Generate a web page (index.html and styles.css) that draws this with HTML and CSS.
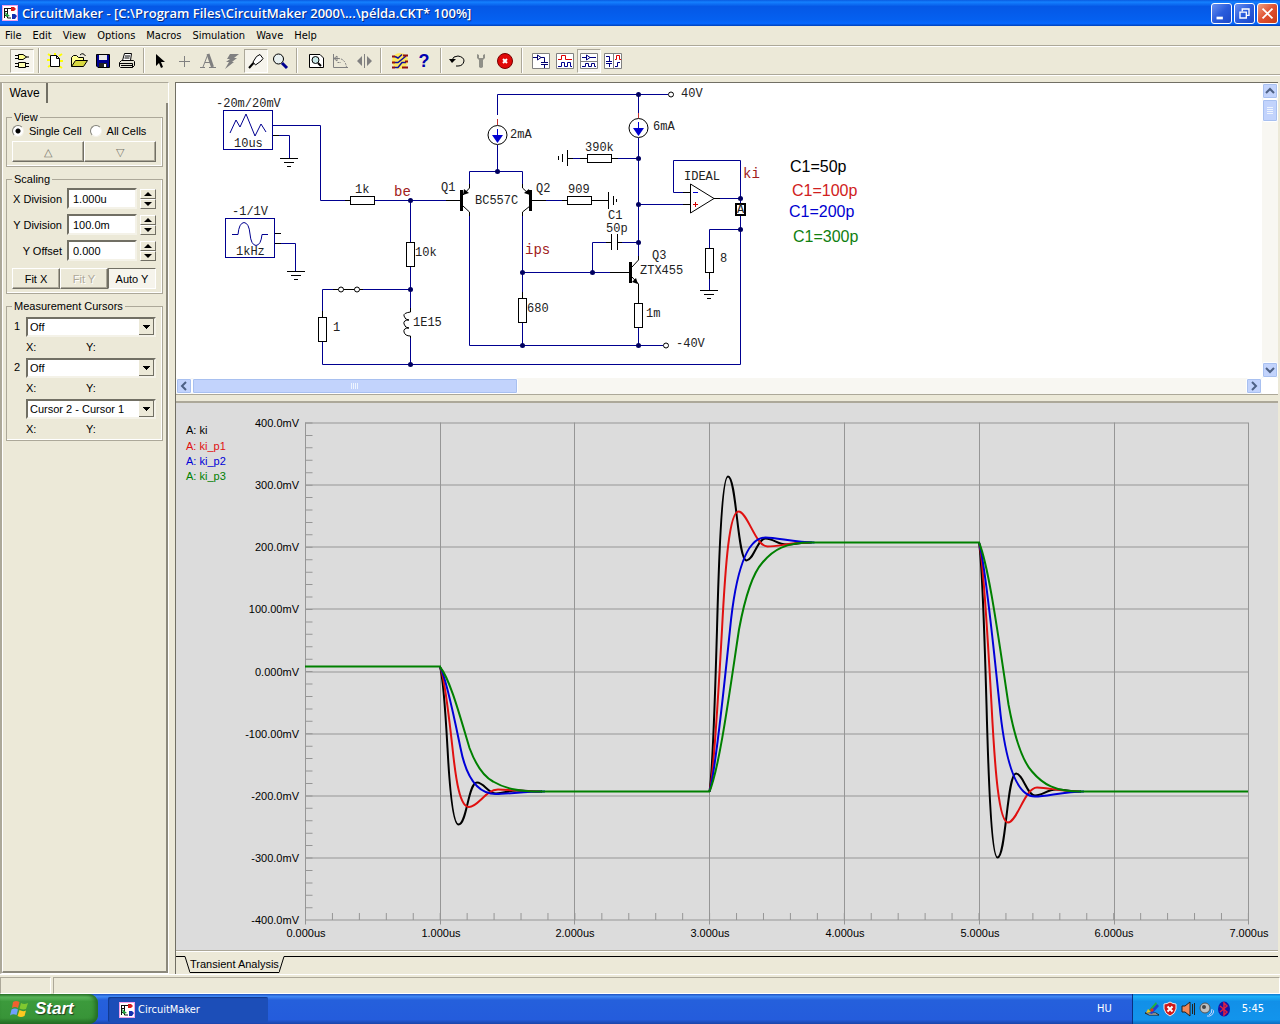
FILE: index.html
```
<!DOCTYPE html>
<html lang="en">
<head>
<meta charset="UTF-8">
<title>CircuitMaker</title>
<link rel="stylesheet" href="styles.css">
</head>
<body>

<!-- shared symbols -->
<svg class="defs" width="0" height="0">
  <defs>
    <symbol id="app" viewBox="0 0 16 16">
      <rect x="0.5" y="0.5" width="15" height="15" fill="#fff" stroke="#f0a0e8"/>
      <path d="M2 3.5H10M2 6.5H6M2.5 3V13M5.5 4V13H9M3 10.5H7" stroke="#111" fill="none"/>
      <path d="M9 2H12L14 4L12 6H9Z" fill="#d81c1c"/>
      <path d="M3 7L8 11L4 12Z" fill="#20a040"/>
      <path d="M10 9H13L15 11L13 14H10Z" fill="#1530b0"/>
    </symbol>
    <symbol id="ground" viewBox="-10 0 20 10" overflow="visible">
      <path d="M-9 0.5H9M-5 4.5H5M-2 8.5H2" stroke="#000"/>
    </symbol>
  </defs>
</svg>

<header class="titlebar">
  <svg class="ico16"><use href="#app"/></svg>
  <h1>CircuitMaker - [C:\Program Files\CircuitMaker 2000\...\példa.CKT* 100%]</h1>
  <button class="winbtn" aria-label="Minimize"><svg viewBox="0 0 21 21"><path d="M5 15.5H12" stroke="#fff" stroke-width="3"/></svg></button>
  <button class="winbtn" aria-label="Restore"><svg viewBox="0 0 21 21"><path d="M8 8V5.5H15.5V12.5H13M5.5 9H12.5V15.5H5.5Z" fill="none" stroke="#fff" stroke-width="1.5"/></svg></button>
  <button class="winbtn close" aria-label="Close"><svg viewBox="0 0 21 21"><path d="M5 5L16 16M16 5L5 16" stroke="#fff" stroke-width="2"/></svg></button>
</header>

<nav class="menu">
  <button>File</button><button>Edit</button><button>View</button><button>Options</button><button>Macros</button><button>Simulation</button><button>Wave</button><button>Help</button>
</nav>

<div class="toolbar">
  <button class="tool on" aria-label="Parts"><svg viewBox="0 0 20 20"><path d="M6.5 3.5H11L14.5 6L11 8.5H6.5Z" fill="#ffff90" stroke="#000"/><path d="M3 4.5H6M3 7.5H6M14 6H17M6.5 11.5H13.5V16.5H6.5ZM3 12.5H6M3 15.5H6M14 12.5H17M14 15.5H17" fill="#ffffb0" stroke="#000"/></svg></button>
  <span class="sep"></span>
  <button class="tool" aria-label="New"><svg viewBox="0 0 20 20"><path d="M3 3L6 5M2 9H5M3 16L6 14M17 3L14 5M18 10H15M17 17L14 15M10 2V4" stroke="#ff0" stroke-width="2"/><path d="M5.5 4.5H11.5L14.5 7.5V15.5H5.5ZM11.5 4.5V7.5H14.5" fill="#fff" stroke="#000"/></svg></button>
  <button class="tool" aria-label="Open"><svg viewBox="0 0 20 20"><path d="M2.5 15.5V6.5L4.5 4.5H7.5L9.5 6.5H14.5V9.5" fill="#ffff90" stroke="#000"/><path d="M2.5 15.5L6.5 9.5H18.5L14.5 15.5Z" fill="#d8d840" stroke="#000"/><path d="M11 4Q14 1 16.5 5" fill="none" stroke="#000"/></svg></button>
  <button class="tool" aria-label="Save"><svg viewBox="0 0 20 20"><path d="M3.5 3.5H16.5V16.5H5L3.5 15Z" fill="#000090" stroke="#000"/><path d="M6 4H14V9H6Z" fill="#e8e8e8"/><path d="M6 12H14V16H6Z" fill="#222"/><path d="M11 13H13V16H11Z" fill="#fff"/></svg></button>
  <button class="tool" aria-label="Print"><svg viewBox="0 0 20 20"><path d="M5.5 9.5L7.5 2.5H14.5L13.5 9.5" fill="#fff" stroke="#000"/><path d="M8 5H13M7.5 7H12.5" stroke="#000"/><path d="M2.5 11.5L4.5 9.5H16.5L17.5 10.5V14.5L15.5 16.5H3.5L2.5 15.5ZM2.5 12.5H15.5V16.5M4 14.5H15" fill="#e4e2d4" stroke="#000"/></svg></button>
  <span class="sep"></span>
  <button class="tool" aria-label="Arrow"><svg viewBox="0 0 20 20"><path d="M6 3V15L9 12L11 17L13 16L11 11H15Z" fill="#000"/></svg></button>
  <button class="tool" aria-label="Wire"><svg viewBox="0 0 20 20"><path d="M10.5 5V16M5 10.5H16" stroke="#808080"/></svg></button>
  <button class="tool" aria-label="Text"><svg viewBox="0 0 20 20"><path d="M10 3L5 16M7 11.5H13M2 16.5H7M11 16.5H18" fill="none" stroke="#808080"/><path d="M10 3L14.5 16" stroke="#808080" stroke-width="3"/></svg></button>
  <button class="tool" aria-label="Delete"><svg viewBox="0 0 20 20"><path d="M8 3H17L12 7H15L10 11H12L3 18L7 11H4L8 8H5Z" fill="#808080"/></svg></button>
  <button class="tool on" aria-label="Probe"><svg viewBox="0 0 20 20"><path d="M3 17L7.5 12" stroke="#000" stroke-width="2"/><path d="M7 11L10.5 5.5L14 3.5L17 7.5L15 10L9.5 14Z" fill="#fff" stroke="#000"/></svg></button>
  <button class="tool" aria-label="Zoom"><svg viewBox="0 0 20 20"><circle cx="8.5" cy="8" r="5" fill="#e8f0f0" stroke="#000"/><path d="M12 12L17 17" stroke="#000090" stroke-width="3"/></svg></button>
  <span class="sep wide"></span>
  <button class="tool" aria-label="Fit page"><svg viewBox="0 0 20 20"><path d="M3.5 3.5H14L17.5 7V16.5H3.5Z" fill="#fff" stroke="#000"/><circle cx="9.5" cy="9" r="3.5" fill="#c8e8e8" stroke="#000"/><path d="M12 12L15 15" stroke="#000" stroke-width="2"/></svg></button>
  <button class="tool" aria-label="Rotate"><svg viewBox="0 0 20 20"><path d="M3.5 3V16.5H18M3 7.5H8M7 5V10L4 7.5Z" fill="none" stroke="#808080"/><path d="M8 7.5Q15 7.500 16.500 16M7.500 11.500H11" fill="none" stroke="#808080" stroke-dasharray="2 1"/></svg></button>
  <button class="tool" aria-label="Mirror"><svg viewBox="0 0 20 20"><path d="M8 5V15L3 10ZM13 5V15L18 10Z" fill="#808080"/><path d="M10.5 3V17" stroke="#808080"/></svg></button>
  <span class="sep wide"></span>
  <button class="tool" aria-label="Digital options"><svg viewBox="0 0 20 20"><circle cx="10" cy="10" r="8" fill="#ffe860"/><path d="M5 5.5L8 7L12 3.500M5 11.500H8L16 5M5 16.500H8L12 11.500H16" stroke="#1010a0" stroke-width="1.5" fill="none"/><path d="M2 5.5H5M2 11.5H5M2 16.5H5M13 4.5H18M15 10.5H18M12 16.5H18" stroke="#901010" stroke-width="2"/></svg></button>
  <button class="tool help" aria-label="Help">?</button>
  <span class="sep"></span>
  <button class="tool" aria-label="Reset"><svg viewBox="0 0 20 20"><path d="M5 9Q6 5 11 5Q17 6 17 10Q16 15 11 15H9" fill="none" stroke="#000"/><path d="M2 8H9L5 12Z"/></svg></button>
  <button class="tool" aria-label="Step"><svg viewBox="0 0 20 20"><path d="M6 3V7L8 9V16Q10 18 12 16V9L14 7V3L12 4V7H8V4Z" fill="#909088"/></svg></button>
  <button class="tool" aria-label="Stop"><svg viewBox="0 0 20 20"><circle cx="10" cy="10" r="7.5" fill="#e00808" stroke="#700"/><path d="M8 8L12 12M12 8L8 12" stroke="#fff" stroke-width="2"/></svg></button>
  <span class="sep wide"></span>
  <button class="tool" aria-label="Schematic view"><svg viewBox="0 0 20 20"><path d="M1.5 2.5H18.5V17.5H1.5Z" fill="#fff" stroke="#808080"/><path d="M2 6.5H6M6.5 4V9L10 6.5ZM10 6.5H13.5V11M10 11.5H17M10 13.5H17M13.5 14V17" fill="none" stroke="#000070"/></svg></button>
  <button class="tool" aria-label="Wave view"><svg viewBox="0 0 20 20"><path d="M1.5 2.5H18.5V17.5H1.5Z" fill="#fff" stroke="#808080"/><path d="M3 8.5H6.5V4.5H10.5V8.5H17" fill="none" stroke="#d00"/><path d="M3 15.5H6.5V11.5H9.5V15.5H12.5V11.5H15.5V15.5H17" fill="none" stroke="#000090"/></svg></button>
  <button class="tool on" aria-label="Split horizontally"><svg viewBox="0 0 20 20"><path d="M1.5 2.5H18.5V17.5H1.5ZM1.5 10.5H18.5" fill="#fff" stroke="#808080"/><path d="M3 6.5H7M7.5 4V9L11 6.5ZM11 6.5H17M3 15.5H6.5V12.5H9.5V15.5H12.5V12.5H15.5V15.5H17" fill="none" stroke="#000080"/></svg></button>
  <button class="tool" aria-label="Split vertically"><svg viewBox="0 0 20 20"><path d="M1.5 2.5H18.5V17.5H1.5ZM10.5 2.5V17.5" fill="#fff" stroke="#808080"/><path d="M3 5.5H6.5V10M3 10.5H9M3 12.5H9M6.5 13V16M12 15.5H14.5V11.5H17" fill="none" stroke="#000080"/><path d="M12 8.5H13.5V4.5H16.5V8.5H18" fill="none" stroke="#d00"/></svg></button>
</div>

<main class="work">
  <aside class="side">
    <button class="tab">Wave</button>
    <form class="page">
      <fieldset>
        <legend>View</legend>
        <div class="radios">
          <label><input type="radio" name="cell" checked>Single Cell</label>
          <label><input type="radio" name="cell">All Cells</label>
        </div>
        <div class="btnrow">
          <button type="button" class="btn dim" aria-label="Previous cell">△</button>
          <button type="button" class="btn dim" aria-label="Next cell">▽</button>
        </div>
      </fieldset>

      <fieldset>
        <legend>Scaling</legend>
        <div class="scale">
          <label for="xdiv">X Division</label>
          <input type="text" id="xdiv" value="1.000u">
          <span class="spin"><button type="button" class="up" aria-label="Increase X division"></button><button type="button" class="down" aria-label="Decrease X division"></button></span>
          <label for="ydiv">Y Division</label>
          <input type="text" id="ydiv" value="100.0m">
          <span class="spin"><button type="button" class="up" aria-label="Increase Y division"></button><button type="button" class="down" aria-label="Decrease Y division"></button></span>
          <label for="yoff">Y Offset</label>
          <input type="text" id="yoff" value="0.000">
          <span class="spin"><button type="button" class="up" aria-label="Increase Y offset"></button><button type="button" class="down" aria-label="Decrease Y offset"></button></span>
        </div>
        <div class="btnrow">
          <button type="button" class="btn">Fit X</button>
          <button type="button" class="btn" disabled>Fit Y</button>
          <button type="button" class="btn pressed">Auto Y</button>
        </div>
      </fieldset>

      <fieldset>
        <legend>Measurement Cursors</legend>
        <div class="cursor">
          <label for="c1">1</label>
          <select id="c1"><option>Off</option></select>
          <span class="xy"><span>X:</span><span>Y:</span></span>
        </div>
        <div class="cursor">
          <label for="c2">2</label>
          <select id="c2"><option>Off</option></select>
          <span class="xy"><span>X:</span><span>Y:</span></span>
        </div>
        <div class="cursor">
          <select aria-label="Difference"><option>Cursor 2 - Cursor 1</option></select>
          <span class="xy"><span>X:</span><span>Y:</span></span>
        </div>
      </fieldset>
    </form>
  </aside>

  <section class="docs">
    <div class="schematic">
      <div class="canvas">
        <svg width="1085" height="294" viewBox="176 83 1085 294">
          <!-- wires -->
          <g class="wire">
            <path d="M279 135.5H289.5V158M273 125.5H320.5V200.5H345M375 200.5H446M281 243.5H295.5V271"/>
            <path d="M410.5 200V242M410.5 266V308M410.5 338V364M333 289.5H322.5V311M363 289.5H410M322.5 342V364.5H740.5V215"/>
            <path d="M497.5 115V94.5H668M638.5 94V113M497.5 145V171.5M469.5 186V171.5H522.5V186M469.5 214V345.5H663"/>
            <path d="M522.5 214V292M522.5 323V345M522.5 272.5H615M592.5 272V242.5H606M622 242.5H638M546 200.5H562"/>
            <path d="M638.5 138V256M638.5 288V298M638.5 328V345M618 158.5H638M572 158.5H580M638 204.5H683"/>
            <path d="M683 192.5H673.5V160.5H740.5V203M720 198.5H740M740 229.5H709.5V248M709.5 279V290"/>
            <rect x="223.5" y="110.5" width="49" height="39"/>
            <rect x="225.5" y="218.5" width="49" height="39"/>
            <path d="M230 133L236 120L240 127L246 114L255 136L261 124L266 132"/>
            <path d="M232 234.5H238Q239 223 244 222.5Q249 223 250 234Q251 245 256 245.5Q261 245 262 234.5H268"/>
          </g>
          <!-- parts -->
          <g class="part">
            <path d="M273 135.5H279M275 233.5H281M275 243.5H281M345 200.5H350M446 200.5H461M322.5 311V317M333 289.5H363"/>
            <path d="M410.5 308V312Q403 313 404 316Q405 320 409 320Q403 320 404 324Q405 328 409 328Q403 328 404 332Q405 336 410.5 336V338"/>
            <path d="M463 195L469.5 188V184M463 206L469.5 212V216M530 195L522.5 188V184M530 206L522.5 212V216M532 200.5H546M562 200.5H608"/>
            <path d="M632 267L638.5 260V256M632 277L638.5 284V303M610 272.5H630M606 242.5H611M618 242.5H622M580 158.5H618M568 158.5H573M522.5 292V298"/>
            <path d="M611.5 234V250M617.5 234V250M567.5 150V166M562.5 154V162M558.5 156V160M608.5 192V209M613.5 196V205M616.5 199V202"/>
            <path d="M683 192.5H690M683 204.5H690M714 198.5H720M709.5 273V279"/>
            <path d="M690.5 184V213L714 198.5Z" fill="#fff"/>
            <circle cx="497.5" cy="135" r="9.5" fill="#fff"/><circle cx="638.5" cy="128" r="9.5" fill="#fff"/>
            <g fill="#fff">
              <rect x="350.5" y="196.5" width="24" height="8"/><rect x="567.5" y="196.5" width="24" height="8"/><rect x="587.5" y="154.5" width="24" height="8"/>
              <rect x="406.5" y="242.5" width="8" height="24"/><rect x="318.5" y="317.5" width="8" height="24"/><rect x="518.5" y="298.5" width="8" height="24"/>
              <rect x="634.5" y="303.5" width="8" height="24"/><rect x="705.5" y="248.5" width="8" height="24"/>
              <circle cx="341" cy="289.5" r="2.5"/><circle cx="357" cy="289.5" r="2.5"/><circle cx="671" cy="94.5" r="2.5"/><circle cx="666" cy="345.5" r="2.5"/>
            </g>
            <path d="M461.5 190V211M530.5 190V211M630.5 262V283" stroke-width="3"/>
          </g>
          <path d="M463 195L464 189L469 193ZM530 195L529 189L524 193ZM638 284L632 282L636 278Z"/>
          <path d="M497.5 119V125M638.5 113V118" stroke="#c03030"/>
          <path d="M497.5 129V136M638.5 122V129" stroke="#0000d0"/>
          <path d="M492 135H503L497.5 143ZM633 128H644L638.5 136Z" fill="#0000d0"/>
          <path d="M693 192.5H698" stroke="#0000d0"/><path d="M693 204.5H698M695.5 202V207" stroke="#d00000"/>
          <rect x="736" y="204" width="9" height="11" fill="#fff" stroke="#000" stroke-width="2"/>
          <svg x="279" y="158" width="20" height="10"><use href="#ground"/></svg>
          <svg x="286" y="271" width="20" height="10"><use href="#ground"/></svg>
          <svg x="699" y="290" width="20" height="10"><use href="#ground"/></svg>
          <g fill="#000060">
            <circle cx="410.5" cy="200.5" r="2.5"/><circle cx="410.5" cy="289.5" r="2.5"/><circle cx="410.5" cy="364.5" r="2.5"/><circle cx="497.5" cy="171.5" r="2.5"/>
            <circle cx="638.5" cy="94.5" r="2.5"/><circle cx="638.5" cy="158.5" r="2.5"/><circle cx="638.5" cy="204.5" r="2.5"/><circle cx="638.5" cy="242.5" r="2.5"/><circle cx="638.5" cy="345.5" r="2.5"/>
            <circle cx="522.5" cy="272.5" r="2.5"/><circle cx="592.5" cy="272.5" r="2.5"/><circle cx="522.5" cy="345.5" r="2.5"/><circle cx="740.5" cy="198.5" r="2.5"/><circle cx="740.5" cy="229.5" r="2.5"/>
          </g>
          <g class="name">
            <text x="216" y="107">-20m/20mV</text><text x="234" y="147">10us</text><text x="232" y="215">-1/1V</text><text x="236" y="255">1kHz</text>
            <text x="355" y="193">1k</text><text x="441" y="191">Q1</text><text x="475" y="204">BC557C</text><text x="536" y="192">Q2</text><text x="510" y="138">2mA</text>
            <text x="585" y="151">390k</text><text x="568" y="193">909</text><text x="608" y="219">C1</text><text x="606" y="232">50p</text><text x="653" y="130">6mA</text>
            <text x="681" y="97">40V</text><text x="684" y="180">IDEAL</text><text x="652" y="259">Q3</text><text x="640" y="274">ZTX455</text><text x="720" y="262">8</text>
            <text x="646" y="317">1m</text><text x="676" y="347">-40V</text><text x="527" y="312">680</text><text x="415" y="256">10k</text><text x="413" y="326">1E15</text><text x="333" y="331">1</text>
            <text x="737" y="213">A</text>
          </g>
          <g class="net"><text x="394" y="196">be</text><text x="525" y="254">ips</text><text x="743" y="178">ki</text></g>
          <g class="note">
            <text x="790" y="172">C1=50p</text><text x="792" y="196" fill="#d02020">C1=100p</text><text x="789" y="217" fill="#0000d0">C1=200p</text><text x="793" y="242" fill="#108010">C1=300p</text>
          </g>
        </svg>
      </div>
      <div class="vscroll">
        <button class="sb" aria-label="Scroll up"><svg viewBox="0 0 14 14"><path d="M3 9L7 5L11 9"/></svg></button>
        <span class="thumb"><svg viewBox="0 0 14 14"><path d="M4 3.5H10M4 5.5H10M4 7.5H10M4 9.5H10"/></svg></span>
        <span class="track"></span>
        <button class="sb" aria-label="Scroll down"><svg viewBox="0 0 14 14"><path d="M3 5L7 9L11 5"/></svg></button>
      </div>
      <div class="hscroll">
        <button class="sb" aria-label="Scroll left"><svg viewBox="0 0 14 14"><path d="M9 3L5 7L9 11"/></svg></button>
        <span class="thumb"><svg viewBox="0 0 14 14"><path d="M3.5 4V10M5.5 4V10M7.5 4V10M9.5 4V10"/></svg></span>
        <span class="track"></span>
        <button class="sb" aria-label="Scroll right"><svg viewBox="0 0 14 14"><path d="M5 3L9 7L5 11"/></svg></button>
      </div>
    </div>

    <div class="plot">
      <svg viewBox="176 404 1102 546">
        <defs>
          <!-- step responses, settled value on y=0 -->
          <path id="s0" class="step" d="M0 249C3 230 6 140 7.5 87C9 30 12 -66 18.5 -66C27 -66 28 18 37 18C44 18 48 -4 56 -4C64 -4 68 2 77 2C85 2 92 0 102 0"/>
          <path id="s1" class="step" d="M0 249C4 235 9 150 12.5 87C16 20 20 -31 29 -31C38 -31 46 4 58 4C70 4 80 0 100 0"/>
          <path id="s2" class="step" d="M0 249C6 230 14 150 20.5 87C27 20 40 -5 56 -5C68 -5 85 0 105 0"/>
          <path id="s3" class="step" d="M0 249C10 225 20 150 29.5 87C36 52 43 31 53 20C64 7 76 0 102 0"/>
        </defs>
        <g class="grid">
          <path d="M305 423.5H1248M305 485.5H1248M305 547.5H1248M305 609.5H1248M305 672.5H1248M305 734.5H1248M305 796.5H1248M305 858.5H1248M305 920.5H1249"/>
          <path d="M305.5 423V925M440.5 423V925M574.5 423V925M709.5 423V925M844.5 423V925M979.5 423V925M1114.5 423V925M1248.5 423V925"/>
          <path d="M309 423V920" stroke-width="7" stroke-dasharray="1 11.43"/>
          <path d="M305 917H1248" stroke-width="7" stroke-dasharray="1 25.94"/>
        </g>
        <g class="trace" stroke="#000"><use href="#s0" transform="translate(440 792) scale(1 -.5)"/><use href="#s0" transform="translate(709.5 543)"/><use href="#s0" transform="translate(979 792) scale(1 -1)"/></g>
        <g class="trace" stroke="#e01010"><use href="#s1" transform="translate(440 792) scale(1 -.5)"/><use href="#s1" transform="translate(709.5 543)"/><use href="#s1" transform="translate(979 792) scale(1 -1)"/></g>
        <g class="trace" stroke="#0000d8"><use href="#s2" transform="translate(440 792) scale(1 -.5)"/><use href="#s2" transform="translate(709.5 543)"/><use href="#s2" transform="translate(979 792) scale(1 -1)"/></g>
        <g class="trace" stroke="#008000"><use href="#s3" transform="translate(440 792) scale(1 -.5)"/><use href="#s3" transform="translate(709.5 543)"/><use href="#s3" transform="translate(979 792) scale(1 -1)"/>
          <path d="M305 667H441M541 792H710M811 543H980M1080 792H1248"/></g>
        <g class="axis">
          <text x="186" y="434">A: ki</text><text x="186" y="450" fill="#e01010">A: ki_p1</text><text x="186" y="465" fill="#0000d8">A: ki_p2</text><text x="186" y="480" fill="#008000">A: ki_p3</text>
        </g>
        <g class="axis" text-anchor="end">
          <text x="299" y="427">400.0mV</text><text x="299" y="489">300.0mV</text><text x="299" y="551">200.0mV</text><text x="299" y="613">100.00mV</text><text x="299" y="676">0.000mV</text>
          <text x="299" y="738">-100.00mV</text><text x="299" y="800">-200.0mV</text><text x="299" y="862">-300.0mV</text><text x="299" y="924">-400.0mV</text>
        </g>
        <g class="axis" text-anchor="middle">
          <text x="306" y="937">0.000us</text><text x="441" y="937">1.000us</text><text x="575" y="937">2.000us</text><text x="710" y="937">3.000us</text>
          <text x="845" y="937">4.000us</text><text x="980" y="937">5.000us</text><text x="1114" y="937">6.000us</text><text x="1249" y="937">7.000us</text>
        </g>
      </svg>
    </div>

    <div class="sheets">
      <svg class="edge" width="14" height="18"><path d="M0 .5H9L14 16.5"/></svg>
      <button class="sheet">Transient Analysis</button>
      <svg class="edge" width="7" height="18"><path d="M0 16.5L5 .5H7"/></svg>
      <span class="rule"></span>
    </div>
  </section>
</main>

<div class="status"><span></span><span></span></div>

<footer class="taskbar">
  <button class="start">
    <svg viewBox="0 0 20 20" width="20" height="20"><path d="M3 3Q6 1 9.5 3L8 9Q5 7 2 9Z" fill="#f06030"/><path d="M11 4Q14 6 18 4L16 10Q13 11 9.5 9.5Z" fill="#80c830"/><path d="M1.5 10.5Q5 8.5 8 10.5L6.5 16Q3 14.5 0 16.5Z" fill="#70a0ff"/><path d="M9.5 11Q13 13 16 11.5L14.5 17Q11 19 7.5 17Z" fill="#ffc820"/></svg>
    Start
  </button>
  <button class="task"><svg class="ico16"><use href="#app"/></svg>CircuitMaker</button>
  <span class="lang">HU</span>
  <div class="tray">
    <svg viewBox="0 0 16 16"><path d="M1 12L5 14H15L12 12Z" fill="#eee" stroke="#222"/><path d="M3 11L12 1L13 3L6 12Z" fill="#20b040"/><path d="M5 12L13 3L15 5L8 13Z" fill="#2040d0"/><path d="M2 12L4 8L7 11Z" fill="#f0c020"/><path d="M6 9L8 7L10 9L8 11Z" fill="#e03020"/></svg>
    <svg viewBox="0 0 16 16"><path d="M8 1Q11 3 14 3V8Q13 13 8 15Q3 13 2 8V3Q5 3 8 1Z" fill="#d01818" stroke="#eee"/><path d="M5.5 5.5L10.5 10.5M10.5 5.5L5.5 10.5" stroke="#fff" stroke-width="2"/></svg>
    <svg viewBox="0 0 16 16"><path d="M2 5H5L10 1V15L5 11H2Z" fill="#f08858" stroke="#202020"/><path d="M12.5 3V13M14.5 2V14" stroke="#222"/></svg>
    <svg viewBox="0 0 16 16"><circle cx="7" cy="7" r="5" fill="#c0c0c0" stroke="#555"/><circle cx="6" cy="6" r="2" fill="#444"/><path d="M11 14Q14 13 14 8M9 15Q15 16 16 9" stroke="#c8d8ff" fill="none"/></svg>
    <svg viewBox="0 0 16 16"><ellipse cx="8" cy="8" rx="6" ry="7.5" fill="#1414a8"/><path d="M4 5L11 11L8 14V2L11 5L4 11" fill="none" stroke="#e02040" stroke-width="1.5"/></svg>
    <time>5:45</time>
  </div>
</footer>

</body>
</html>
```
FILE: styles.css
```
*
{
    box-sizing: border-box;
}

body
{
    margin: 0;
    height: 100vh;
    display: flex;
    flex-direction: column;
    background: #ece9d8;
    color: #000;
    font: 11px/14px "Liberation Sans", Arial, sans-serif;
    overflow: hidden;
}

button, input, select
{
    font: inherit;
    color: inherit;
    margin: 0;
    padding: 0;
    border: 0;
    background: none;
    border-radius: 0;
}

svg
{
    display: block;
    flex: none;
}

.defs
{
    position: absolute;
}

.ico16
{
    width: 16px;
    height: 16px;
}

/* title bar */
.titlebar
{
    display: flex;
    align-items: center;
    gap: 2px;
    height: 26px;
    padding: 0 2px;
    background: linear-gradient(#0a5be0, #1480ff 8%, #0558e6 25%, #0560f0 75%, #0668ff 90%, #0040b8);
}

.titlebar h1
{
    flex: 1;
    margin: 0 0 0 2px;
    color: #fff;
    font: 600 13px/20px "Open Sans", "Noto Sans", sans-serif;
    text-shadow: 1px 1px #0a2a80;
    white-space: nowrap;
}

.winbtn
{
    width: 21px;
    height: 21px;
    border: 1px solid #fff;
    border-radius: 3px;
    background: linear-gradient(135deg, #6a90f0, #2a5cdc 50%, #1c48c8);
}

.close
{
    background: linear-gradient(135deg, #f0a080, #e05030 50%, #c83c18);
}

/* menu and toolbar */
.menu
{
    display: flex;
    gap: 11px;
    height: 20px;
    padding-left: 5px;
    border-bottom: 1px solid #aca899;
}

.menu button
{
    font-family: "DejaVu Sans Condensed", "DejaVu Sans", sans-serif;
}

.toolbar
{
    display: flex;
    align-items: center;
    height: 29px;
    padding-left: 10px;
    border-top: 1px solid #fff;
    border-bottom: 1px solid #aca899;
    box-shadow: 0 1px #fff;
}

.tool
{
    width: 24px;
    height: 24px;
    padding: 1px;
    border: 1px solid transparent;
}

.tool.on
{
    background: #f6f4ec;
    border-color: #aca899 #fff #fff #aca899;
}

.help
{
    color: #0000b0;
    font: bold 18px/20px "Liberation Sans", Arial, sans-serif;
}

.sep
{
    width: 9px;
    height: 25px;
    background: linear-gradient(90deg, transparent 4px, #aca899 4px, #aca899 5px, #fff 5px, #fff 6px, transparent 6px);
}

.sep.wide
{
    width: 12px;
}

/* work area */
.work
{
    flex: 1;
    display: flex;
    gap: 6px;
    margin-top: 7px;
    min-height: 0;
}

.side
{
    width: 169px;
    display: flex;
    flex-direction: column;
    border-left: 2px solid #aca899;
    border-right: 1px solid #fff;
    border-bottom: 1px solid #fff;
    border-top: 1px solid #aca899;
}

.tab
{
    align-self: flex-start;
    width: 46px;
    height: 20px;
    font-size: 12px;
    border-right: 2px solid #716f64;
    border-left: 1px solid #fff;
}

.page
{
    flex: 1;
    padding: 8px 3px 0;
    border-right: 2px solid #8c897c;
    border-bottom: 2px solid #8c897c;
    border-left: 1px solid #fff;
}

fieldset
{
    min-width: 0;
    margin: 0 0 6px;
    padding: 1px 6px 4px 5px;
    border: 1px solid #aca899;
    box-shadow: inset -1px -1px #fff;
}

legend
{
    padding: 0 2px;
    line-height: 12px;
}

.radios
{
    display: flex;
    gap: 8px;
    height: 17px;
}

.radios label
{
    display: flex;
    align-items: flex-start;
    gap: 5px;
    white-space: nowrap;
}

.radios input
{
    appearance: none;
    width: 12px;
    height: 12px;
    margin-top: 1px;
    border: 1px solid #808078;
    border-right-color: #f4f2e8;
    border-bottom-color: #f4f2e8;
    border-radius: 50%;
    background: #fff;
}

.radios input:checked
{
    background: radial-gradient(circle, #000 2px, #fff 3px);
}

.btnrow
{
    display: flex;
}

.btn
{
    flex: 1;
    height: 21px;
    border: 1px solid;
    border-color: #fff #716f64 #716f64 #fff;
    box-shadow: inset -1px -1px #aca899;
}

.btn.dim
{
    color: #77756a;
}

.btn:disabled
{
    color: #aca899;
    text-shadow: 1px 1px #fff;
}

.btn.pressed
{
    background: #f6f4ec;
    border-color: #716f64 #fff #fff #716f64;
    box-shadow: none;
}

.scale
{
    display: grid;
    grid-template-columns: 52px 1fr 16px;
    column-gap: 3px;
    row-gap: 5px;
    margin: 2px 0 7px;
    align-items: center;
}

.scale label
{
    padding-right: 2px;
    text-align: right;
    white-space: nowrap;
}

.scale input
{
    width: 100%;
    height: 21px;
    padding: 0 4px;
    background: #fff;
    border: 2px solid;
    border-color: #716f64 #f4f2e8 #f4f2e8 #716f64;
}

.spin button
{
    display: block;
    width: 16px;
    height: 10px;
    border: 1px solid;
    border-color: #fff #716f64 #716f64 #fff;
}

.spin button::before
{
    content: "";
    display: block;
    width: 0;
    margin: auto;
    border: 4px solid transparent;
}

.spin .up::before
{
    border-top: 0;
    border-bottom-color: #000;
}

.spin .down::before
{
    border-bottom: 0;
    border-top-color: #000;
}

.cursor
{
    display: grid;
    grid-template-columns: 12px 1fr;
    column-gap: 2px;
    row-gap: 3px;
    margin-top: 4px;
}

.cursor label
{
    padding: 2px 0 0 2px;
}

.cursor select,
.cursor .xy
{
    grid-column: 2;
}

/* drop-down arrow is drawn from stacked gradients */
.cursor select
{
    appearance: none;
    height: 20px;
    padding: 1px 2px;
    background-color: #fff;
    background-image:
        linear-gradient(#000, #000), linear-gradient(#000, #000), linear-gradient(#000, #000), linear-gradient(#000, #000),
        linear-gradient(#716f64, #716f64), linear-gradient(#716f64, #716f64), linear-gradient(#ece9d8, #ece9d8);
    background-size: 7px 1px, 5px 1px, 3px 1px, 1px 1px, 1px 100%, 15px 1px, 15px 100%;
    background-position: right 4px top 6px, right 5px top 7px, right 6px top 8px, right 7px top 9px, right, right bottom, right;
    background-repeat: no-repeat;
    border: 2px solid;
    border-color: #716f64 #f4f2e8 #f4f2e8 #716f64;
}

.xy
{
    display: grid;
    grid-template-columns: 60px 1fr;
}

/* documents */
.docs
{
    flex: 1;
    min-width: 0;
    display: flex;
    flex-direction: column;
    margin-right: 2px;
    border-left: 1px solid #716f64;
}

.schematic
{
    display: grid;
    grid-template-columns: 1fr 16px;
    grid-template-rows: 295px 16px;
    border-top: 1px solid #716f64;
    border-bottom: 1px solid #aca899;
    background: #fff;
}

.canvas
{
    overflow: hidden;
    min-width: 0;
}

.wire
{
    fill: none;
    stroke: #000090;
}

.part
{
    fill: none;
    stroke: #000;
}

.name
{
    font: 12px "Liberation Mono", "Courier New", monospace;
    fill: #222;
}

.net
{
    font: 14px "Liberation Mono", "Courier New", monospace;
    fill: #a02020;
}

.note
{
    font: 16px "Liberation Sans", Arial, sans-serif;
}

.vscroll,
.hscroll
{
    display: flex;
    background: #f8f7f2;
}

.vscroll
{
    flex-direction: column;
}

.sb,
.thumb
{
    flex: none;
    display: flex;
    align-items: center;
    justify-content: center;
    width: 16px;
    height: 16px;
    border: 1px solid #fff;
    border-radius: 2px;
    background: #c2d3fc;
    box-shadow: inset 0 0 0 1px #a8c0f0;
}

.sb svg,
.thumb svg
{
    width: 14px;
    height: 14px;
    fill: none;
    stroke: #4d6185;
    stroke-width: 2;
}

.thumb svg
{
    stroke: #eef4fe;
    stroke-width: 1;
}

.vscroll .thumb
{
    height: 23px;
}

.hscroll .thumb
{
    width: 30%;
}

.track
{
    flex: 1;
}

.plot
{
    flex: 1;
    min-height: 0;
    margin-top: 6px;
    background: #dcdcdc;
    border-top: 2px solid #aca899;
    border-bottom: 1px solid #aca899;
}

.plot svg
{
    width: 100%;
    height: 100%;
}

.grid
{
    fill: none;
    stroke: #969696;
}

.trace
{
    fill: none;
    stroke-width: 2;
}

.step
{
    vector-effect: non-scaling-stroke;
}

.axis
{
    font: 11px "Liberation Sans", Arial, sans-serif;
}

/* sheet tabs */
.sheets
{
    display: flex;
    height: 23px;
    padding-top: 5px;
    box-shadow: inset 0 1px #fff;
}

.edge path
{
    fill: none;
    stroke: #000;
}

.sheet
{
    height: 17px;
    border-bottom: 1px solid #000;
}

.rule
{
    flex: 1;
    border-top: 1px solid #000;
}

.status
{
    display: flex;
    gap: 2px;
    height: 20px;
    padding-top: 2px;
    border-top: 1px solid #fff;
}

.status span
{
    border: 1px solid;
    border-color: #aca899 #fff #fff #aca899;
    flex: 1;
}

.status span:first-child
{
    flex: 0 0 51px;
}

/* task bar */
.taskbar
{
    display: flex;
    align-items: stretch;
    height: 30px;
    color: #fff;
    font-family: "DejaVu Sans Condensed", "DejaVu Sans", sans-serif;
    background: linear-gradient(#1c50c0, #4088f4 8%, #2560dc 20%, #245cdc 85%, #1a44a8);
}

.start
{
    display: flex;
    align-items: center;
    gap: 5px;
    width: 98px;
    padding-left: 10px;
    border-radius: 0 9px 9px 0;
    background: linear-gradient(#2c7c2c, #5cb85c 10%, #3c9a3c 25%, #389438 80%, #246c24);
    box-shadow: inset -3px 0 4px #246c24;
    font: italic bold 17px/20px "Liberation Sans", Arial, sans-serif;
    text-shadow: 1px 1px 1px #203c20;
}

.task
{
    display: flex;
    align-items: center;
    gap: 3px;
    width: 160px;
    margin: 3px 0 2px 10px;
    padding-left: 11px;
    border-radius: 2px;
    background: #1c4eb8;
    box-shadow: inset 1px 1px 1px #123a90;
}

.lang
{
    margin-left: auto;
    padding: 8px 20px 0 0;
}

.tray
{
    display: flex;
    align-items: center;
    gap: 2px;
    padding: 0 16px 0 11px;
    border-left: 1px solid #0a3080;
    background: linear-gradient(#0c78d0, #1cb0f8 8%, #1290e8 25%, #1294ec 85%, #0c6cc0);
}

.tray svg
{
    width: 16px;
    height: 16px;
}

.tray time
{
    margin-left: 8px;
}
```
